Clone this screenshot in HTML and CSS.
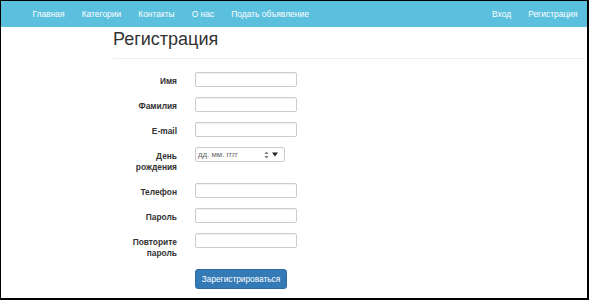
FILE: index.html
```html
<!DOCTYPE html>
<html lang="ru">
<head>
    <meta charset="UTF-8">
    <meta name="viewport" content="width=device-width, initial-scale=1.0">
    <title>Регистрация</title>
    <link rel="stylesheet" href="styles.css">
</head>
<body>
    <div class="frame">
        <nav class="navbar">
            <ul class="nav">
                <li><a href="#">Главная</a></li>
                <li><a href="#">Категории</a></li>
                <li><a href="#">Контакты</a></li>
                <li><a href="#">О нас</a></li>
                <li><a href="#">Подать объявление</a></li>
            </ul>
            <ul class="nav">
                <li><a href="#">Вход</a></li>
                <li><a href="#">Регистрация</a></li>
            </ul>
        </nav>
        <div class="container">
            <h1 class="page-title">Регистрация</h1>
            <form class="reg-form">
                <div class="form-row">
                    <label for="name">Имя</label>
                    <input type="text" id="name">
                </div>
                <div class="form-row">
                    <label for="surname">Фамилия</label>
                    <input type="text" id="surname">
                </div>
                <div class="form-row">
                    <label for="email">E-mail</label>
                    <input type="text" id="email">
                </div>
                <div class="form-row">
                    <label>День рождения</label>
                    <div class="date-input">
                        <span class="date-placeholder">дд. мм. гггг</span>
                        <span class="date-spin">
                            <svg width="5" height="8" viewBox="0 0 5 8"><path d="M2.5 0.5L4.5 3H0.5Z M2.5 7.5L4.5 5H0.5Z" fill="#777"/></svg>
                        </span>
                        <span class="date-drop">
                            <svg width="6" height="5" viewBox="0 0 6 5"><path d="M0 0.5H6L3 4.5Z" fill="#222"/></svg>
                        </span>
                    </div>
                </div>
                <div class="form-row">
                    <label for="phone">Телефон</label>
                    <input type="text" id="phone">
                </div>
                <div class="form-row">
                    <label for="pass">Пароль</label>
                    <input type="password" id="pass">
                </div>
                <div class="form-row">
                    <label for="pass2">Повторите пароль</label>
                    <input type="password" id="pass2">
                </div>
                <div class="form-row">
                    <span></span>
                    <button type="submit" class="btn-primary">Зарегистрироваться</button>
                </div>
            </form>
        </div>
    </div>
</body>
</html>
```

FILE: styles.css
```css
body {
    margin: 0;
    padding: 0;
    background-color: #fff;
    font-family: "Liberation Sans", Arial, sans-serif;
    color: #333;
}

.frame {
    width: 589px;
    height: 300px;
    box-sizing: border-box;
    border: 1px solid #000;
    border-right-width: 2px;
    border-bottom-width: 2px;
    overflow: hidden;
}

.navbar {
    background-color: #5bc0de;
    height: 26px;
    display: flex;
    justify-content: space-between;
    padding: 0 1px 0 23px;
}

.nav {
    list-style-type: none;
    margin: 0;
    padding: 0;
    display: flex;
}

.nav li a {
    display: block;
    padding: 0 8.5px;
    line-height: 26px;
    font-size: 8.45px;
    color: #fff;
    text-decoration: none;
}

.container {
    padding-left: 112px;
    padding-right: 2px;
}

.page-title {
    margin: 2px 0 0;
    font-size: 18px;
    font-weight: normal;
    line-height: 20px;
    padding-bottom: 9px;
    border-bottom: 1px solid #eee;
}

.reg-form {
    margin-top: 13px;
}

.form-row {
    display: grid;
    grid-template-columns: 64px 102px;
    column-gap: 18px;
    align-items: start;
    margin-bottom: 10px;
}

.form-row label {
    text-align: right;
    font-size: 8.4px;
    font-weight: bold;
    line-height: 11px;
    padding-top: 4px;
}

.form-row input {
    box-sizing: border-box;
    width: 102px;
    height: 15px;
    margin: 0;
    padding: 0 3px;
    border: 1px solid #ccc;
    border-radius: 2px;
    box-shadow: inset 0 1px 1px rgba(0, 0, 0, 0.06);
    font-size: 8px;
    outline: none;
}

.date-input {
    box-sizing: border-box;
    width: 90px;
    height: 15px;
    border: 1px solid #ccc;
    border-radius: 2px;
    display: flex;
    align-items: center;
    padding: 0 6px 0 2px;
}

.date-placeholder {
    flex: 1;
    font-size: 7.8px;
    color: #666;
}

.date-spin {
    display: flex;
    margin-right: 3px;
}

.date-drop {
    display: flex;
}

.btn-primary {
    width: 92px;
    height: 20px;
    padding: 0;
    border: 1px solid #2e6da4;
    border-radius: 3px;
    background-color: #337ab7;
    color: #fff;
    font-family: "Liberation Sans", Arial, sans-serif;
    font-size: 8.3px;
}
```
